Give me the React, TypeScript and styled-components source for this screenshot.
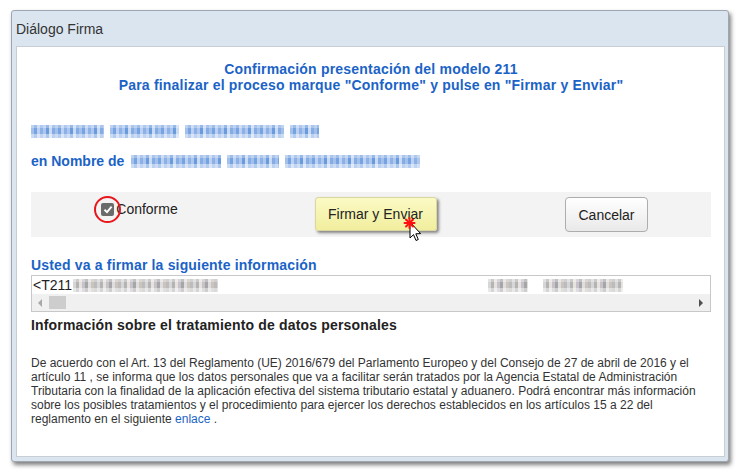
import React from "react";
import styled, { createGlobalStyle } from "styled-components";

const Global = createGlobalStyle`
  html, body { margin: 0; padding: 0; background: #ffffff; }
  body { font-family: Arial, "Liberation Sans", sans-serif; }
`;

const Page = styled.div`
  padding: 10px 0 0 11px;
  width: 742px;
  height: 474px;
  box-sizing: border-box;
`;

const Dialog = styled.div`
  position: relative;
  width: 718px;
  height: 452px;
  box-sizing: border-box;
  background: #dbe5ef;
  border: 1px solid #9ea7b1;
  border-radius: 3px;
  box-shadow: 2px 3px 4px rgba(0, 0, 0, 0.5);
  display: flex;
  flex-direction: column;
`;

const TitleBar = styled.div`
  height: 35px;
  display: flex;
  align-items: center;
  padding-left: 4px;
  font-size: 14px;
  color: #333333;
  padding-top: 1px;
  box-sizing: border-box;
`;

const Content = styled.div`
  margin: 0 3px 4px 4px;
  flex: 1;
  background: #ffffff;
  border: 1px solid #c7ced6;
  padding: 14px 13px 0 14px;
  display: flex;
  flex-direction: column;
`;

const Heading = styled.div`
  text-align: center;
  color: #1b63c6;
  font-weight: bold;
  font-size: 14px;
  letter-spacing: 0.2px;
  line-height: 16px;
`;

const RedactedRow = styled.div<{ $mt: number }>`
  display: flex;
  align-items: center;
  gap: 6px;
  margin-top: ${(p) => p.$mt}px;
  height: 14px;
`;

const Redacted = styled.span<{ $w: number; $tone: "blue" | "gray" }>`
  display: inline-block;
  width: ${(p) => p.$w}px;
  height: 13px;
  background:
    linear-gradient(
      to bottom,
      rgba(255, 255, 255, 0.3) 0 3px,
      rgba(255, 255, 255, 0) 3px 9px,
      rgba(255, 255, 255, 0.45) 9px
    ),
    ${(p) =>
      p.$tone === "blue"
        ? "repeating-linear-gradient(90deg, #a3c0ea 0 3px, #76a3e2 3px 6px, #bcd0f1 6px 9px, #8db0e6 9px 12px, #adc7ed 12px 15px, #6a9bdf 15px 18px, #c9daf3 18px 21px, #86ace5 21px 24px)"
        : "repeating-linear-gradient(90deg, #d6d6d6 0 3px, #b4b4b4 3px 6px, #e6e2de 6px 9px, #c6c1ca 9px 12px, #a6a6a6 12px 15px, #dedede 15px 18px, #cbc4be 18px 21px, #bcbcbc 21px 24px)"};
`;

const NameRow = styled.div`
  display: flex;
  align-items: center;
  gap: 7px;
  margin-top: 15px;
  height: 16px;
  color: #1b63c6;
  font-weight: bold;
  font-size: 14px;
`;

const ActionBar = styled.div`
  margin-top: 23px;
  height: 45px;
  background: #f3f3f3;
  display: grid;
  grid-template-columns: 218px 253px 1fr;
  align-items: center;
`;

const Cell = styled.div`
  display: flex;
  justify-content: center;
  align-items: center;
`;

const CheckCell = styled(Cell)`
  align-self: start;
  padding-top: 9px;
  padding-right: 2px;
`;

const CheckWrap = styled.span`
  position: relative;
  display: inline-flex;
  width: 15px;
  height: 15px;
  align-items: center;
  justify-content: center;
`;

const CheckBox = styled.span`
  width: 13px;
  height: 13px;
  border-radius: 2px;
  background: #6b6b6b;
  display: flex;
  align-items: center;
  justify-content: center;
`;

const Ring = styled.span`
  position: absolute;
  left: -6px;
  top: -6px;
  width: 23px;
  height: 23px;
  border: 2px solid #e8161b;
  border-radius: 50%;
`;

const CheckLabel = styled.span`
  font-size: 14px;
  color: #222222;
  margin-left: 1px;
`;

const Button = styled.button<{ $primary?: boolean }>`
  font-family: Arial, "Liberation Sans", sans-serif;
  font-size: 14px;
  color: #222222;
  height: 34px;
  padding: 0 12px;
  border-radius: ${(p) => (p.$primary ? "3px" : "4px")};
  border: 1px solid ${(p) => (p.$primary ? "#d9d79e" : "#adadad")};
  background: ${(p) =>
    p.$primary
      ? "linear-gradient(#fbfac4, #f1ee9e)"
      : "linear-gradient(#ffffff, #e9e9e9)"};
  box-shadow: ${(p) =>
    p.$primary ? "2px 2px 3px rgba(0,0,0,0.45)" : "none"};
`;

const PrimaryButton = styled(Button)`
  width: 122px;
  height: 34px;
  margin-top: -2px;
`;

const CancelButton = styled(Button)`
  width: 83px;
  height: 35px;
`;

const SectionLabel = styled.div`
  margin-top: 20px;
  line-height: 16px;
  font-size: 14px;
  font-weight: bold;
  letter-spacing: 0.17px;
  color: #1b63c6;
`;

const DataBox = styled.div`
  margin-top: 2px;
  height: 37px;
  border: 1px solid #c8c8c8;
  box-sizing: border-box;
  display: flex;
  flex-direction: column;
`;

const DataLine = styled.div`
  height: 18px;
  display: flex;
  align-items: center;
  font-size: 14px;
  color: #222222;
  white-space: nowrap;
  padding-left: 1px;
`;

const ScrollBar = styled.div`
  flex: 1;
  background: #f0f0f0;
  display: flex;
  align-items: center;
  padding: 0 6px 0 6px;
`;

const Thumb = styled.span`
  width: 17px;
  height: 13px;
  background: #cdcdcd;
  margin-left: 6px;
`;

const Spacer = styled.span`
  flex: 1;
`;

const InfoTitle = styled.div`
  margin-top: 5px;
  line-height: 16px;
  font-size: 14px;
  font-weight: bold;
  letter-spacing: 0.17px;
  color: #222222;
`;

const Paragraph = styled.p`
  margin: 23px 0 0 0;
  font-size: 12px;
  line-height: 14px;
  color: #333333;
`;

const Link = styled.a`
  color: #1b63c6;
  text-decoration: none;
`;

const Cursor = styled.svg`
  position: absolute;
  left: 381px;
  top: 194px;
`;

export default function App() {
  return (
    <>
      <Global />
      <Page>
        <Dialog>
          <TitleBar>Diálogo Firma</TitleBar>
          <Content>
            <Heading>
              Confirmación presentación del modelo 211
              <br />
              Para finalizar el proceso marque "Conforme" y pulse en "Firmar y Enviar"
            </Heading>
            <RedactedRow $mt={31}>
              <Redacted $w={73} $tone="blue" />
              <Redacted $w={69} $tone="blue" />
              <Redacted $w={99} $tone="blue" />
              <Redacted $w={29} $tone="blue" />
            </RedactedRow>
            <NameRow>
              en Nombre de
              <RedactedRow $mt={0}>
                <Redacted $w={90} $tone="blue" />
                <Redacted $w={52} $tone="blue" />
                <Redacted $w={135} $tone="blue" />
              </RedactedRow>
            </NameRow>
            <ActionBar>
              <CheckCell>
                <CheckWrap>
                  <CheckBox>
                    <svg width="10" height="9" viewBox="0 0 10 9">
                      <path d="M1.5 4.8 L4 7.2 L8.6 1.6" fill="none" stroke="#ffffff" strokeWidth="1.9" />
                    </svg>
                  </CheckBox>
                  <Ring />
                </CheckWrap>
                <CheckLabel>Conforme</CheckLabel>
              </CheckCell>
              <Cell>
                <PrimaryButton $primary>Firmar y Enviar</PrimaryButton>
              </Cell>
              <Cell>
                <CancelButton>Cancelar</CancelButton>
              </Cell>
            </ActionBar>
            <SectionLabel>Usted va a firmar la siguiente información</SectionLabel>
            <DataBox>
              <DataLine>
                &lt;T211
                <Redacted $w={145} $tone="gray" style={{ marginLeft: 1 }} />
                <Redacted $w={40} $tone="gray" style={{ marginLeft: 270 }} />
                <Redacted $w={80} $tone="gray" style={{ marginLeft: 15 }} />
              </DataLine>
              <ScrollBar>
                <svg width="5" height="8" viewBox="0 0 5 8">
                  <path d="M4 0 L0 4 L4 8 Z" fill="#a8a8a8" />
                </svg>
                <Thumb />
                <Spacer />
                <svg width="5" height="8" viewBox="0 0 5 8">
                  <path d="M0 0 L4 4 L0 8 Z" fill="#505050" />
                </svg>
              </ScrollBar>
            </DataBox>
            <InfoTitle>Información sobre el tratamiento de datos personales</InfoTitle>
            <Paragraph>
              De acuerdo con el Art. 13 del Reglamento (UE) 2016/679 del Parlamento Europeo y del Consejo de 27 de abril de 2016 y el
              <br />
              artículo 11 , se informa que los datos personales que va a facilitar serán tratados por la Agencia Estatal de Administración
              <br />
              Tributaria con la finalidad de la aplicación efectiva del sistema tributario estatal y aduanero. Podrá encontrar más información
              <br />
              sobre los posibles tratamientos y el procedimiento para ejercer los derechos establecidos en los artículos 15 a 22 del
              <br />
              reglamento en el siguiente <Link href="#">enlace</Link> .
            </Paragraph>
          </Content>
          <Cursor width="30" height="40" viewBox="0 0 30 40">
            <path d="M17 17 L17 33 L20.5 29.6 L23 35.5 L25.3 34.5 L22.8 28.8 L27.6 28.6 Z" fill="#ffffff" stroke="#000000" strokeWidth="1" strokeLinejoin="round" />
            <g stroke="#ff1010" strokeWidth="2" strokeLinecap="round">
              <line x1="16.5" y1="13" x2="16.5" y2="23" />
              <line x1="11.5" y1="18" x2="21.5" y2="18" />
              <line x1="13" y1="14.5" x2="20" y2="21.5" />
              <line x1="20" y1="14.5" x2="13" y2="21.5" />
            </g>
          </Cursor>
        </Dialog>
      </Page>
    </>
  );
}
